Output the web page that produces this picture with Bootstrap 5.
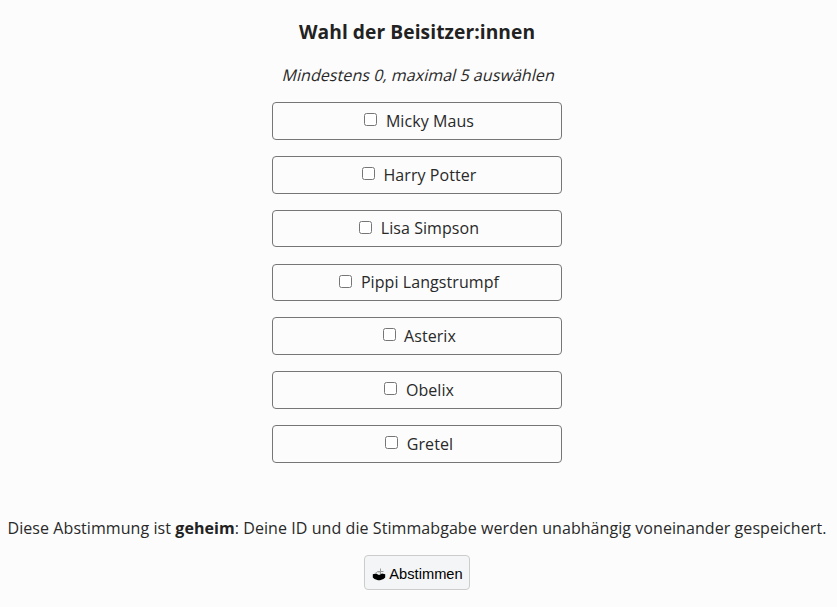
<!DOCTYPE html>
<html lang="de">
<head>
<meta charset="utf-8">
<title>Wahl der Beisitzer:innen</title>
<link rel="stylesheet" href="https://cdn.jsdelivr.net/npm/bootstrap@5.3.0/dist/css/bootstrap.min.css">
<style>
body{background:#fcfcfc;color:#292929;font:400 16px/24px "Open Sans",sans-serif;letter-spacing:.07px;overflow:hidden}
.ballot{padding-right:3px}
h1.ballot-title{font-size:19.2px;line-height:24px;font-weight:700;margin:20px 0 0;color:#222}
.ballot-hint{margin-top:19px;line-height:24px;font-style:normal;transform:skewX(-14deg);padding-left:4px}
.options{width:290px;margin-top:15px;gap:16.17px}
.option{height:37.69px;border:1px solid #767676;border-radius:4px;line-height:35.6px;padding:.68px 0 0 4.4px}
.option input{width:13px;height:13px;margin:0 8.5px 0 0;vertical-align:.68px}
.secret{margin-top:53.25px;line-height:24px;white-space:nowrap}
.secret strong{color:#222}
.vote{margin-top:15px;width:106px;height:35px;padding:2px 0 0 1px;border:1px solid #ccc;border-radius:4px;background:#f4f5f6;color:#000;font:14.67px "Liberation Sans",sans-serif;letter-spacing:0;gap:3px}
</style>
<script src="https://cdn.jsdelivr.net/npm/bootstrap@5.3.0/dist/js/bootstrap.bundle.min.js"></script>
</head>
<body>
<form class="ballot d-flex flex-column align-items-center text-center">
<h1 class="ballot-title">Wahl der Beisitzer:innen</h1>
<em class="ballot-hint">Mindestens 0, maximal 5 auswählen</em>
<div class="options d-flex flex-column">
<label class="option"><input type="checkbox">Micky Maus</label>
<label class="option"><input type="checkbox">Harry Potter</label>
<label class="option"><input type="checkbox">Lisa Simpson</label>
<label class="option"><input type="checkbox">Pippi Langstrumpf</label>
<label class="option"><input type="checkbox">Asterix</label>
<label class="option"><input type="checkbox">Obelix</label>
<label class="option"><input type="checkbox">Gretel</label>
</div>
<p class="secret mb-0">Diese Abstimmung ist <strong>geheim</strong>: Deine ID und die Stimmabgabe werden unabhängig voneinander gespeichert.</p>
<button type="button" class="vote d-flex align-items-center justify-content-center">
<svg width="14" height="14" viewBox="0 0 14 14"><path d="M.8 7.2L4 6.4l3 1.600 3-1.600 3.200.8v3.200L11.500 12 8 13.200H6L2.500 12 .8 10.400z"/><path d="M8.500 1.500v5.500M5.500 4.500h6" fill="none" stroke="#999"/><path d="M3 6.500l3-2 2 2" fill="none" stroke="#aaa"/></svg>Abstimmen</button>
</form>
</body>
</html>
